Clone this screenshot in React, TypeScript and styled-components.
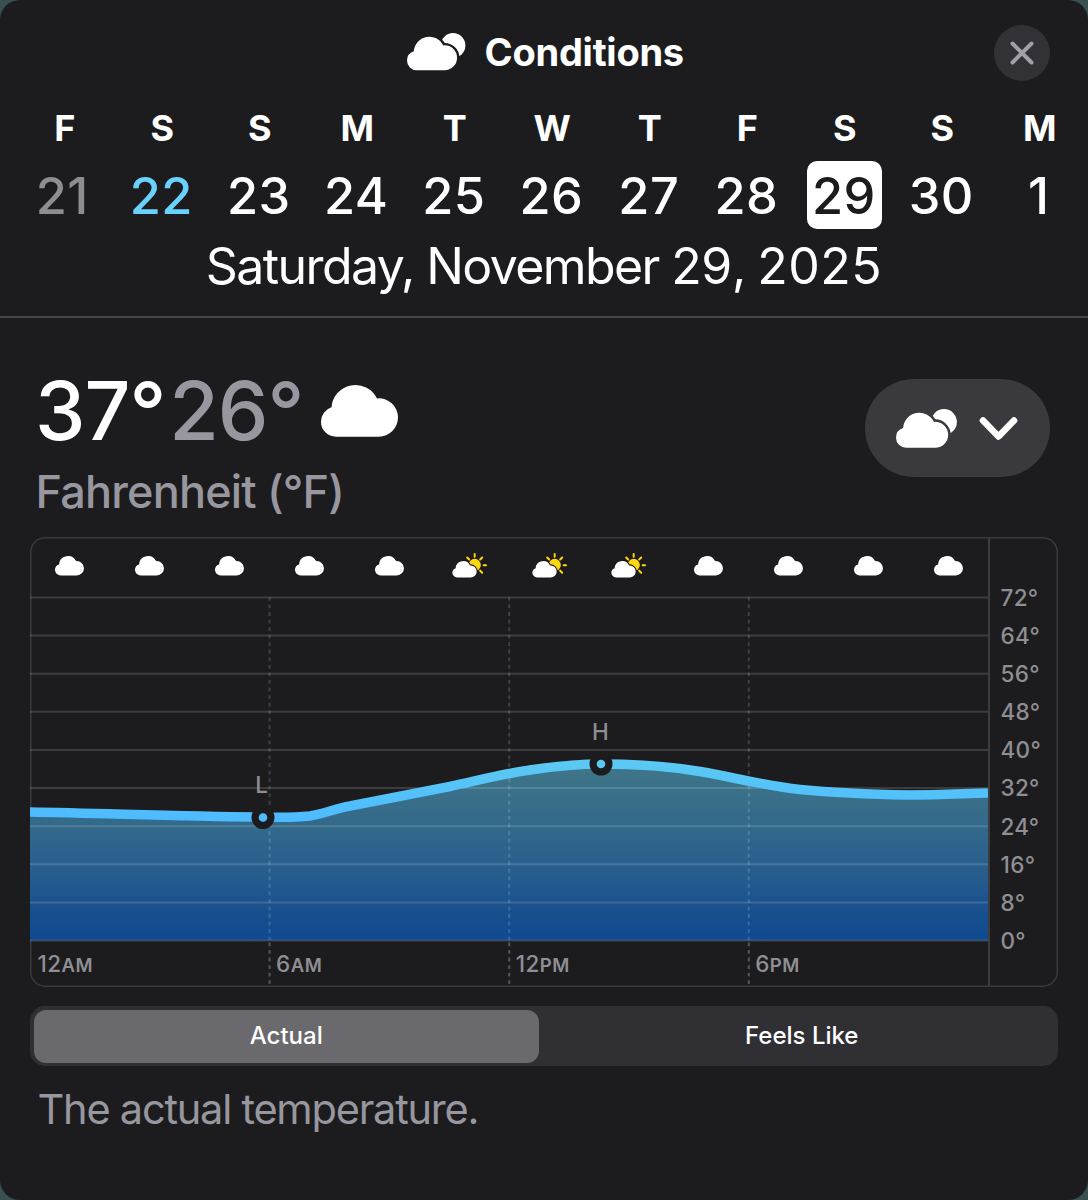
import React from "react";
import styled, { createGlobalStyle } from "styled-components";

const GlobalStyle = createGlobalStyle`
  * { box-sizing: border-box; }
  body {
    margin: 0;
    background: #3a4f52;
    font-family: Inter, "Liberation Sans", sans-serif;
    -webkit-font-smoothing: antialiased;
  }
`;

const Sheet = styled.main`
  width: 1088px;
  height: 1200px;
  display: flex;
  flex-direction: column;
  overflow: hidden;
  border-radius: 20px;
  background: #1c1c1e;
  color: #fff;
`;

const Header = styled.header`
  height: 105px;
  flex: none;
  display: grid;
  grid-template-columns: 94px 1fr 94px;
  align-items: center;
`;

const Title = styled.h1`
  grid-column: 2;
  margin: 0;
  display: flex;
  align-items: center;
  justify-content: center;
  gap: 19.5px;
  padding: 0 0 1px 2.5px;
  font-size: 38px;
  font-weight: 700;
  line-height: 46px;
  letter-spacing: -0.25px;
`;

const CloseButton = styled.button`
  width: 56px;
  height: 56px;
  padding: 0;
  border: 0;
  border-radius: 50%;
  display: grid;
  place-items: center;
  background: #323136;
  color: #a1a0a8;
`;

const Week = styled.div`
  flex: none;
  display: grid;
  grid-template-columns: repeat(11, 97.5px);
  padding-left: 16px;
`;

const Day = styled.div`
  display: flex;
  flex-direction: column;
  align-items: center;
  gap: 10px;
`;

const Weekday = styled.span`
  font-size: 36px;
  line-height: 46px;
  font-weight: 700;
`;

const DayNumber = styled.span<{ $state?: "past" | "today" | "selected" }>`
  min-width: 75px;
  height: 68px;
  padding-right: ${(p) => (p.$state === "past" ? "5px" : "2px")};
  border-radius: 10px;
  text-align: center;
  font-size: 50.5px;
  line-height: 70px;
  font-weight: 450;
  letter-spacing: 0.4px;
  background: ${(p) => (p.$state === "selected" ? "#fff" : "transparent")};
  color: ${(p) =>
    p.$state === "past" ? "#8e8d92" : p.$state === "today" ? "#69d2fc" : p.$state === "selected" ? "#1c1c1e" : "#fff"};
`;

const FullDate = styled.div`
  flex: none;
  height: 89px;
  padding-top: 7px;
  border-bottom: 2px solid #454548;
  text-align: center;
  font-size: 50px;
  line-height: 60px;
  letter-spacing: -1.6px;
`;

const DateDigits = styled.span<{ $spacing: number }>`
  letter-spacing: ${(p) => p.$spacing}px;
`;

const Summary = styled.section`
  flex: none;
  height: 219px;
  display: flex;
  justify-content: space-between;
  align-items: flex-start;
  padding: 61px 38px 0 35px;
`;

const Temps = styled.div`
  display: flex;
  align-items: center;
  height: 64px;
  font-size: 80.5px;
  line-height: 64px;
  font-weight: 500;
  letter-spacing: -1px;
`;

const High = styled.span``;

const Low = styled.span`
  margin-left: 4px;
  color: #98979f;
`;

const TempsIcon = styled.span`
  display: flex;
  margin-left: 18px;
`;

const Unit = styled.div`
  margin: 21px 0 0 0.5px;
  font-size: 45px;
  line-height: 56px;
  font-weight: 500;
  letter-spacing: -0.8px;
  color: #98979f;
`;

const MetricButton = styled.button`
  width: 185px;
  height: 98px;
  padding: 0 32px 0 31px;
  border: 0;
  border-radius: 49px;
  display: flex;
  align-items: center;
  justify-content: space-between;
  background: #3a393d;
  color: #fff;
`;

const ChartCard = styled.section`
  flex: none;
  width: 1028px;
  height: 450px;
  margin-left: 30px;
  display: grid;
  grid-template-columns: 958px 1fr;
  overflow: hidden;
  border-radius: 15px;
  box-shadow: inset 0 0 0 1.5px #3a3a3c;
`;

const ChartMain = styled.div`
  display: flex;
  flex-direction: column;
`;

const HourIcons = styled.div`
  height: 57px;
  display: grid;
  grid-template-columns: repeat(12, 1fr);
  place-items: center;
`;

const Plot = styled.svg`
  display: block;
  flex: none;
  margin-bottom: -45px;
`;

const Hours = styled.div`
  height: 44px;
  display: grid;
  grid-template-columns: repeat(4, 239.6px);
`;

const Hour = styled.span`
  padding-left: 6.5px;
  font-size: 22.5px;
  line-height: 44px;
  font-weight: 500;
  letter-spacing: 0.4px;
  color: #8f8e93;
  &:first-child {
    padding-left: 7.5px;
  }
  small {
    font-size: 18.5px;
    font-weight: 600;
    letter-spacing: 0.5px;
  }
`;

const Axis = styled.div`
  display: flex;
  flex-direction: column;
  padding: 42px 0 0 10.5px;
  border-left: 2px solid #3d3d3f;
`;

const AxisLabel = styled.span`
  height: 38.1px;
  font-size: 22.5px;
  line-height: 38.1px;
  font-weight: 500;
  letter-spacing: 0.3px;
  color: #8f8e93;
`;

const Segments = styled.div`
  flex: none;
  width: 1028px;
  height: 60px;
  margin: 19px 0 0 30px;
  padding: 3.5px;
  display: grid;
  grid-template-columns: 1fr 1fr;
  gap: 10px;
  border-radius: 15px;
  background: #302f34;
`;

const Segment = styled.button<{ $active?: boolean }>`
  padding: 0;
  border: 0;
  border-radius: 12px;
  font: 500 24px/52px Inter, "Liberation Sans", sans-serif;
  color: #fff;
  background: ${(p) => (p.$active ? "#6a696e" : "transparent")};
`;

const Description = styled.p`
  margin: 15px 0 0 37.5px;
  font-size: 41.5px;
  line-height: 57px;
  letter-spacing: -1.22px;
  color: #98979f;
`;

const IconSvg = styled.svg`
  display: block;
  overflow: visible;
`;

const CLOUD =
  "M45 155A45 45 0 0 1 0 110A45 45 0 0 1 31.500 67A72 72 0 0 1 168 40.200A57.500 57.500 0 0 1 231 97.500A57.500 57.500 0 0 1 173.500 155Z";

const Cloud = ({ width }: { width: number }) => (
  <IconSvg width={width} height={(width * 155) / 231} viewBox="0 0 231 155">
    <path d={CLOUD} fill="#fff" />
  </IconSvg>
);

const CloudDisc = ({ id, width }: { id: string; width: number }) => (
  <IconSvg width={width} height={(width * 172) / 270} viewBox="0 -17 270 172">
    <mask id={id} maskUnits="userSpaceOnUse" x="0" y="-20" width="280" height="180">
      <rect x="0" y="-20" width="280" height="180" fill="#fff" />
      <path d={CLOUD} fill="#000" stroke="#000" strokeWidth="22" />
    </mask>
    <circle cx="212.5" cy="40.5" r="57" fill="#fff" mask={`url(#${id})`} />
    <path d={CLOUD} fill="#fff" />
  </IconSvg>
);

const CloudSun = () => (
  <IconSvg width="34.7" height="24.7" viewBox="-1 0 104 74">
    <g stroke="#ffd60a" strokeWidth="6" strokeLinecap="round">
      <path d="M67 3V11M83.5 19.5L89.500 13.500M94 36.500H101M83.500 53L89.500 59M50.500 19.500L44.500 13.500" />
    </g>
    <circle cx="67" cy="36" r="18.500" fill="#ffd60a" />
    <g transform="translate(0 24.500) scale(.316)">
      <path d={CLOUD} fill="#fff" stroke="#1c1c1e" strokeWidth="20" paintOrder="stroke" />
    </g>
  </IconSvg>
);

const DAYS: { name: string; date: number; state?: "past" | "today" | "selected" }[] = [
  { name: "F", date: 21, state: "past" },
  { name: "S", date: 22, state: "today" },
  { name: "S", date: 23 },
  { name: "M", date: 24 },
  { name: "T", date: 25 },
  { name: "W", date: 26 },
  { name: "T", date: 27 },
  { name: "F", date: 28 },
  { name: "S", date: 29, state: "selected" },
  { name: "S", date: 30 },
  { name: "M", date: 1 },
];

const SKY = ["c", "c", "c", "c", "c", "s", "s", "s", "c", "c", "c", "c"];
const HOURS = [["12", "AM"], ["6", "AM"], ["12", "PM"], ["6", "PM"]];
const TICKS = [72, 64, 56, 48, 40, 32, 24, 16, 8, 0];

/* Plot origin is the left edge of the card; the 72° line lies at y = 3.5 and the 0° line at y = 346.5. */
const TOP = 3.5;
const STEP = 38.11;
const CURVE =
  "M0 218C80 219.500 160 222.500 233 223C250 223.500 265 223.500 280 222C295 219.500 305 214.500 320 212C350 206 385 199.500 420 192.500C450 186 475 179.500 500 176C530 171.500 550 170 571 170C600 170 635 171.500 670 177.500C700 182.500 730 191 770 195.500C810 199.500 850 200.500 880 201C910 201 935 199.500 958 199";

const Marker = ({ x, y, label, labelX, labelY }: { x: number; y: number; label: string; labelX: number; labelY: number }) => (
  <g>
    <circle cx={x} cy={y} r="11.500" fill="#1c1c1e" />
    <circle cx={x} cy={y} r="4.300" fill="url(#line)" />
    <text x={labelX} y={labelY} textAnchor="middle" fontSize="22.500" fontWeight="500" fill="#8f8e93">
      {label}
    </text>
  </g>
);

export default function App() {
  return (
    <>
      <GlobalStyle />
      <Sheet>
        <Header>
          <Title>
            <CloudDisc id="title-cloud" width={58.5} />
            Conditions
          </Title>
          <CloseButton aria-label="Close">
            <svg width="24" height="24" viewBox="0 0 24 24" stroke="currentColor" strokeWidth="4" strokeLinecap="round">
              <path d="M2.500 2.500L21.500 21.500M21.500 2.500L2.500 21.500" />
            </svg>
          </CloseButton>
        </Header>

        <Week>
          {DAYS.map((d) => (
            <Day key={d.date}>
              <Weekday>{d.name}</Weekday>
              <DayNumber $state={d.state}>{d.date}</DayNumber>
            </Day>
          ))}
        </Week>
        <FullDate>
          Saturday, November <DateDigits $spacing={-0.4}>29</DateDigits>, <DateDigits $spacing={0.5}>2025</DateDigits>
        </FullDate>

        <Summary>
          <div>
            <Temps>
              <High>37°</High>
              <Low>26°</Low>
              <TempsIcon>
                <Cloud width={77} />
              </TempsIcon>
            </Temps>
            <Unit>Fahrenheit (°F)</Unit>
          </div>
          <MetricButton aria-label="Change metric">
            <CloudDisc id="menu-cloud" width={61} />
            <IconSvg width="39" height="24" viewBox="0 0 39 24" fill="none" stroke="currentColor" strokeWidth="6.600" strokeLinecap="round" strokeLinejoin="round">
              <path d="M4 4.500L19.500 20.500L35 4.500" />
            </IconSvg>
          </MetricButton>
        </Summary>

        <ChartCard>
          <ChartMain>
            <HourIcons>
              {SKY.map((s, i) => (s === "c" ? <Cloud key={i} width={29} /> : <CloudSun key={i} />))}
            </HourIcons>
            <Plot width="958" height="393" viewBox="0 0 958 393">
              <defs>
                <linearGradient id="line" gradientUnits="userSpaceOnUse" x1="0" y1="170" x2="0" y2="224">
                  <stop offset="0" stopColor="#5bc9f3" />
                  <stop offset="1" stopColor="#4dbbff" />
                </linearGradient>
                <linearGradient id="area" gradientUnits="userSpaceOnUse" x1="0" y1="170" x2="0" y2="346">
                  <stop offset="0" stopColor="#407688" />
                  <stop offset="0.350" stopColor="#33698a" />
                  <stop offset="0.600" stopColor="#285e8d" />
                  <stop offset="0.800" stopColor="#1b528e" />
                  <stop offset="1" stopColor="#0f498f" />
                </linearGradient>
              </defs>
              <path d={`${CURVE}V346.500H0Z`} fill="url(#area)" />
              {TICKS.map((t, i) => (
                <path key={t} d={`M0 ${TOP + STEP * i}H958`} stroke="#fff" strokeOpacity="0.140" strokeWidth="2" />
              ))}
              {[239.6, 479.2, 718.8].map((x) => (
                <g key={x} stroke="#fff" strokeWidth="2" strokeDasharray="3.800 3.750">
                  <path d={`M${x} 3V346`} strokeOpacity="0.160" />
                  <path d={`M${x} 348.500V391`} strokeOpacity="0.260" />
                </g>
              ))}
              <path d={CURVE} fill="none" stroke="url(#line)" strokeWidth="9.500" />
              <Marker x={233} y={223.5} label="L" labelX={231.5} labelY={198.5} />
              <Marker x={571} y={170} label="H" labelX={570.5} labelY={146} />
            </Plot>
            <Hours>
              {HOURS.map(([n, half]) => (
                <Hour key={n + half}>
                  {n}
                  <small>{half}</small>
                </Hour>
              ))}
            </Hours>
          </ChartMain>
          <Axis>
            {TICKS.map((t) => (
              <AxisLabel key={t}>{t}°</AxisLabel>
            ))}
          </Axis>
        </ChartCard>

        <Segments>
          <Segment $active>Actual</Segment>
          <Segment>Feels Like</Segment>
        </Segments>
        <Description>The actual temperature.</Description>
      </Sheet>
    </>
  );
}
